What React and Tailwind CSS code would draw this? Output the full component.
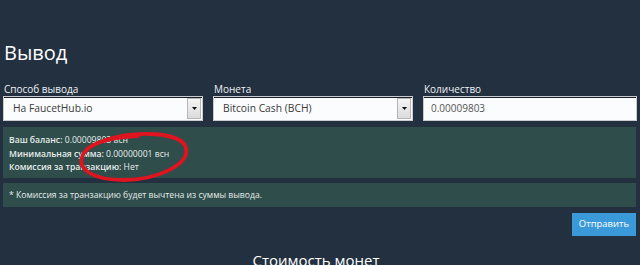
import React from 'react';

function SelectBox({ value }) {
    return (
        <div className="flex h-[25px] items-stretch border border-[#c8ccd0] bg-[#fbfcfd] shadow-[inset_0_1px_0_#1a1f25]">
            <div className="flex flex-1 items-center pl-[9px] text-[10.3px] text-[#3a3a3a]">{value}</div>
            <div className="m-[1px] flex w-[14px] items-center justify-center border border-[#b5b5b5] bg-gradient-to-b from-[#f4f4f4] to-[#dcdcdc]">
                <svg width="5" height="3" viewBox="0 0 5 3">
                    <path d="M0 0h5L2.5 3z" fill="#111" />
                </svg>
            </div>
        </div>
    );
}

export default function App() {
    return (
        <div className="relative h-[265px] overflow-hidden bg-[#23303f] px-[3px] font-['Open_Sans',sans-serif]">
            <h1 className="pl-[1px] pt-[39px] text-[20px] leading-[28px] text-white">Вывод</h1>

            <div className="mt-[15px] grid grid-cols-[200px_200px_1fr] gap-x-[10px]">
                <div>
                    <div className="pl-[1px] text-[10px] leading-[14px] text-[#eef2f5]">Способ вывода</div>
                    <SelectBox value="На FaucetHub.io" />
                </div>
                <div>
                    <div className="pl-[1px] text-[10px] leading-[14px] text-[#eef2f5]">Монета</div>
                    <SelectBox value="Bitcoin Cash (BCH)" />
                </div>
                <div>
                    <div className="pl-[1px] text-[10px] leading-[14px] text-[#eef2f5]">Количество</div>
                    <div className="flex h-[25px] items-center border border-[#c8ccd0] bg-[#fbfcfd] pl-[7px] text-[10px] text-[#555] shadow-[inset_0_1px_0_#1a1f25]">
                        0.00009803
                    </div>
                </div>
            </div>

            <div className="mr-[1px] mt-[6px] h-[51px] bg-[#2e4d4b] px-[6px] pt-[7px] text-[8.6px] leading-[13.5px] text-[#e6ecea]">
                <div><span className="font-semibold">Ваш баланс:</span> 0.00009803 всн</div>
                <div><span className="font-semibold">Минимальная сумма:</span> 0.00000001 всн</div>
                <div><span className="font-semibold">Комиссия за транзакцию:</span> Нет</div>
            </div>

            <div className="mr-[1px] mt-[5px] flex h-[24px] items-center bg-[#2e4d4b] px-[6px] text-[8.6px] text-[#e6ecea]">
                * Комиссия за транзакцию будет вычтена из суммы вывода.
            </div>

            <div className="mr-[1px] mt-[6px] flex justify-end">
                <button className="h-[23px] w-[64px] bg-[#3a9ad9] text-[9.5px] text-white">Отправить</button>
            </div>

            <h2 className="mt-[14px] pr-[8px] text-center text-[15px] leading-[20px] text-white">Стоимость монет</h2>

            <svg className="pointer-events-none absolute left-[76px] top-[131px]" width="118" height="54" viewBox="0 0 118 54">
                <path
                    d="M30 9 C60 -1 106 1 110 17 C114 34 80 49 48 49 C16 49 2 38 6 26 C9 15 28 6 62 5"
                    fill="none"
                    stroke="#e0141e"
                    strokeWidth="3.8"
                    strokeLinecap="round"
                />
            </svg>
        </div>
    );
}
